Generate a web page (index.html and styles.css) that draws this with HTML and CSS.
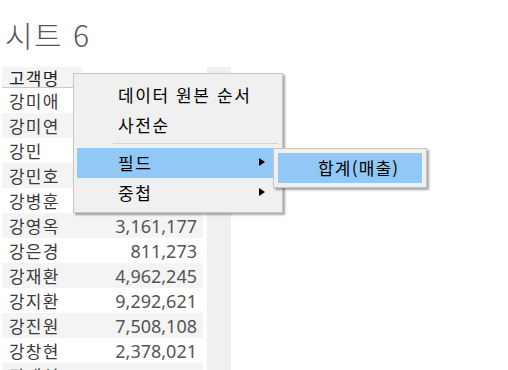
FILE: index.html
```html
<!DOCTYPE html>
<html lang="ko">
<head>
<meta charset="utf-8">
<link rel="stylesheet" href="styles.css">
</head>
<body>
<div class="page">
  <h1 class="title">시트 6</h1>
  <div class="sheet">
    <div class="table">
      <div class="row head"><div class="name hcell">고객명</div><div class="val"></div></div>
      <div class="row"><div class="name">강미애</div><div class="val"></div></div>
      <div class="row alt"><div class="name">강미연</div><div class="val"></div></div>
      <div class="row"><div class="name">강민</div><div class="val"></div></div>
      <div class="row alt"><div class="name">강민호</div><div class="val"></div></div>
      <div class="row"><div class="name">강병훈</div><div class="val"></div></div>
      <div class="row alt"><div class="name">강영옥</div><div class="val">3,161,177</div></div>
      <div class="row"><div class="name">강은경</div><div class="val">811,273</div></div>
      <div class="row alt"><div class="name">강재환</div><div class="val">4,962,245</div></div>
      <div class="row"><div class="name">강지환</div><div class="val">9,292,621</div></div>
      <div class="row alt"><div class="name">강진원</div><div class="val">7,508,108</div></div>
      <div class="row"><div class="name">강창현</div><div class="val">2,378,021</div></div>
      <div class="row alt"><div class="name">강태현</div><div class="val">1,204,530</div></div>
    </div>
    <div class="band"></div>
  </div>

  <div class="menu">
    <div class="item">데이터 원본 순서</div>
    <div class="item">사전순</div>
    <div class="sep"></div>
    <div class="item active">필드<span class="arrow"></span></div>
    <div class="item">중첩<span class="arrow"></span></div>
  </div>

  <div class="submenu">
    <div class="subitem">합계(매출)</div>
  </div>
</div>
</body>
</html>
```

FILE: styles.css
```css
html, body {
  margin: 0;
  padding: 0;
  background: #ffffff;
  overflow: hidden;
}
.page {
  position: relative;
  width: 508px;
  height: 370px;
  overflow: hidden;
  font-family: "Noto Sans CJK KR", "Noto Sans", sans-serif;
}
.title {
  margin: 0;
  padding: 15px 0 0 5px;
  height: 67px;
  box-sizing: border-box;
  font-size: 30px;
  line-height: 38px;
  font-weight: 300;
  color: #555555;
  letter-spacing: 1.5px;
}
.sheet {
  display: flex;
  align-items: stretch;
  padding-left: 2px;
}
.table {
  width: 201px;
}
.row {
  display: flex;
  height: 25px;
  align-items: center;
  font-size: 17px;
}
.row.alt {
  background: #f4f4f4;
}
.row.head {
  height: 20px;
  border-bottom: 1px solid #c8c8c8;
  width: 80px;
  background: #f4f4f4;
}
.name {
  width: 80px;
  padding-left: 7px;
  box-sizing: border-box;
  color: #3a3a3a;
  letter-spacing: 1.2px;
  white-space: nowrap;
}
.hcell {
  color: #222222;
}
.val {
  flex: 1;
  text-align: right;
  padding-right: 6px;
  font-family: "Noto Sans", sans-serif;
  font-size: 18px;
  color: #555555;
}
.band {
  width: 24px;
  margin-left: 4px;
  background: #f0f0f0;
}
.menu {
  position: absolute;
  left: 73px;
  top: 73px;
  width: 208px;
  height: 132px;
  background: #f0f0f0;
  border: 1px solid #c6c6c6;
  box-shadow: 2px 2px 2px rgba(0, 0, 0, 0.35);
  padding-top: 6px;
}
.item {
  position: relative;
  height: 30px;
  line-height: 30px;
  margin: 0 9px 0 3px;
  padding-left: 41px;
  font-size: 17px;
  letter-spacing: 1.6px;
  color: #000000;
}
.item.active {
  background: #91c8f6;
}
.sep {
  height: 1px;
  background: #d4d4d4;
  margin: 3px 4px 4px 39px;
}
.arrow {
  position: absolute;
  right: 8px;
  top: 10px;
  width: 0;
  height: 0;
  border-top: 4.5px solid transparent;
  border-bottom: 4.5px solid transparent;
  border-left: 6px solid #000000;
}
.submenu {
  position: absolute;
  left: 273px;
  top: 148px;
  width: 144px;
  height: 30px;
  padding: 4px;
  background: #f0f0f0;
  border: 1px solid #c6c6c6;
  box-shadow: 2px 2px 2px rgba(0, 0, 0, 0.35);
}
.subitem {
  height: 30px;
  line-height: 30px;
  background: #91c8f6;
  padding-left: 40px;
  font-size: 17px;
  letter-spacing: 1.2px;
  color: #000000;
}
```
